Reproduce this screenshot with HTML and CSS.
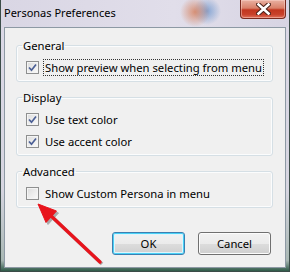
FILE: index.html
```html
<!DOCTYPE html>
<html lang="en">
<head>
    <meta charset="UTF-8">
    <title>Personas Preferences</title>
    <link rel="stylesheet" href="styles.css">
</head>
<body>
    <div class="window">
        <!-- title bar -->
        <div class="titlebar">
            <span class="caption">Personas Preferences</span>
            <div class="close-btn">
                <svg width="15" height="12" viewBox="0 0 15 12">
                    <path d="M2.5 1.5 L12.5 10.5 M12.5 1.5 L2.5 10.5" stroke="#4a2018" stroke-width="4.6" stroke-linecap="square"/>
                    <path d="M2.5 1.5 L12.5 10.5 M12.5 1.5 L2.5 10.5" stroke="#ffffff" stroke-width="2.6" stroke-linecap="square"/>
                </svg>
            </div>
        </div>

        <!-- dialog body -->
        <div class="client">
            <fieldset class="group">
                <legend>General</legend>
                <label class="check">
                    <span class="box">
                        <svg width="9" height="9" viewBox="0 0 9 9"><path d="M1 4.5 L3.5 7.2 L8 1.5" stroke="#4b5f95" stroke-width="1.7" fill="none"/></svg>
                    </span>
                    <span class="text focused">Show preview when selecting from menu</span>
                </label>
            </fieldset>

            <fieldset class="group">
                <legend>Display</legend>
                <label class="check">
                    <span class="box">
                        <svg width="9" height="9" viewBox="0 0 9 9"><path d="M1 4.5 L3.5 7.2 L8 1.5" stroke="#4b5f95" stroke-width="1.7" fill="none"/></svg>
                    </span>
                    <span class="text">Use text color</span>
                </label>
                <label class="check">
                    <span class="box">
                        <svg width="9" height="9" viewBox="0 0 9 9"><path d="M1 4.5 L3.5 7.2 L8 1.5" stroke="#4b5f95" stroke-width="1.7" fill="none"/></svg>
                    </span>
                    <span class="text">Use accent color</span>
                </label>
            </fieldset>

            <fieldset class="group">
                <legend>Advanced</legend>
                <label class="check">
                    <span class="box"></span>
                    <span class="text">Show Custom Persona in menu</span>
                </label>
            </fieldset>

            <!-- dialog buttons -->
            <div class="buttons">
                <button class="btn default">OK</button>
                <button class="btn">Cancel</button>
            </div>
        </div>

        <!-- red annotation arrow -->
        <svg class="arrow" width="290" height="272" viewBox="0 0 290 272">
            <g fill="#555" stroke="#555" opacity="0.45" transform="translate(2 2)">
                <line x1="100" y1="262" x2="49" y2="214" stroke-width="3.6"/>
                <polygon points="38,204 56.5,211 46,222.5" stroke-width="1"/>
            </g>
            <g fill="#e8141c" stroke="#e8141c">
                <line x1="100" y1="262" x2="49" y2="214" stroke-width="3.4" stroke-linecap="round"/>
                <polygon points="38,204 56.5,211 46,222.5" stroke-width="1" stroke-linejoin="round"/>
            </g>
        </svg>
    </div>
</body>
</html>
```

FILE: styles.css
```css
body {
    margin: 0;
    padding: 0;
    font-family: "Noto Sans", "Open Sans", sans-serif;
    font-size: 11.25px;
}

.window {
    position: relative;
    width: 290px;
    height: 272px;
    box-sizing: border-box;
    display: flex;
    flex-direction: column;
    border: 1px solid #3b4c48;
    border-top: none;
    background: linear-gradient(to bottom, #dcd9e7 0%, #d6d5e0 70%, #a9b8b4 96%, #2f5a48 100%);
}

/* title bar */
.titlebar {
    height: 27px;
    display: flex;
    align-items: flex-start;
    background:
        radial-gradient(circle at 194px 12px, rgba(214, 120, 80, 0.75) 0, rgba(214, 120, 80, 0) 15px),
        radial-gradient(circle at 206px 11px, rgba(110, 150, 205, 0.8) 0, rgba(110, 150, 205, 0) 14px),
        linear-gradient(to right, #d9d6e4, #e1deea 60%, #d7d4e3);
}

.caption {
    padding: 5px 0 0 3px;
    line-height: 16px;
    font-size: 11px;
    color: #000;
}

.close-btn {
    margin-left: auto;
    margin-right: 3px;
    width: 46px;
    height: 19px;
    box-sizing: border-box;
    display: flex;
    align-items: center;
    justify-content: center;
    border: 1px solid #7a2a1f;
    border-top: none;
    border-radius: 0 0 4px 4px;
    background: linear-gradient(to bottom, #e9b1a2 0%, #d98069 45%, #c2361f 55%, #c8412a 80%, #e0705a 100%);
    box-shadow: inset 0 0 0 1px rgba(255, 220, 210, 0.45);
}

/* client area */
.client {
    flex: 1;
    margin: 0 3px 3px 3px;
    padding: 10px 12px 0 11px;
    display: flex;
    flex-direction: column;
    gap: 8px;
    background-color: #f0f0f0;
    border: 1px solid #8d99a4;
}

.group {
    margin: 0;
    padding: 6px 5px 5px 5px;
    border: 1px solid #d5dfe5;
    border-radius: 3px;
    box-shadow: inset 0 0 0 1px #fbfcfd;
    display: flex;
    flex-direction: column;
    gap: 5px;
}

.group legend {
    padding: 0 1px;
    line-height: 15px;
    color: #000;
}

.check {
    margin-left: 4px;
    display: flex;
    align-items: center;
    gap: 4px;
    height: 17px;
    white-space: nowrap;
}

.box {
    width: 13px;
    height: 13px;
    box-sizing: border-box;
    display: flex;
    align-items: center;
    justify-content: center;
    border: 1px solid #8e8f8f;
    background: linear-gradient(135deg, #dcdcdc, #fbfbfb);
    box-shadow: inset 0 0 0 1px #f4f4f4;
}

.text {
    padding: 0 1px;
    line-height: 15px;
    border: 1px solid transparent;
    color: #000;
}

.text.focused {
    border: 1px dotted #333;
}

/* buttons */
.buttons {
    margin-top: 16px;
    display: flex;
    justify-content: flex-end;
    gap: 13px;
    padding-right: 2px;
}

.btn {
    width: 73px;
    height: 23px;
    font-family: "Noto Sans", "Open Sans", sans-serif;
    font-size: 11.25px;
    color: #000;
    border: 1px solid #707070;
    border-radius: 3px;
    background: linear-gradient(to bottom, #f2f2f2 0%, #ebebeb 50%, #dddddd 50%, #cfcfcf 100%);
    box-shadow: inset 0 0 0 1px #fcfcfc;
    cursor: pointer;
}

.btn.default {
    border-color: #3c7fb1;
    box-shadow: inset 0 0 0 1px #48d1f6, inset 0 0 0 2px #dff4fc;
}

.arrow {
    position: absolute;
    left: -1px;
    top: 0;
    pointer-events: none;
}
```
